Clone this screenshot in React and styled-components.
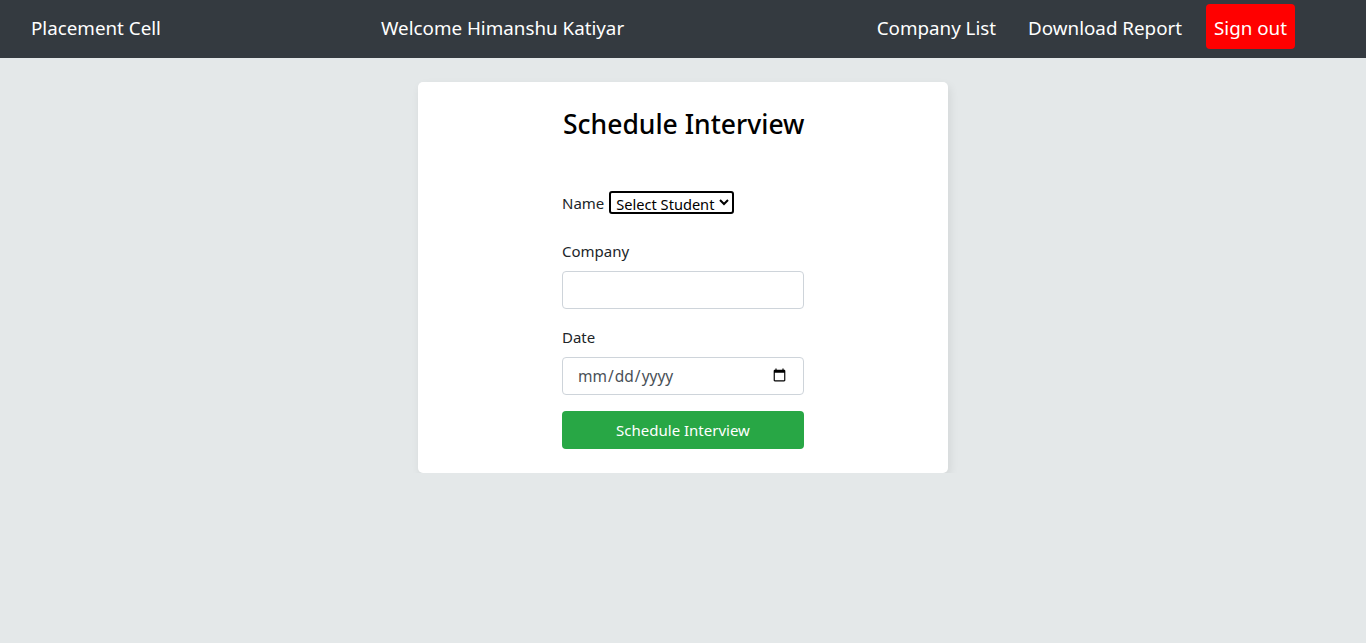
import React from "react";
import styled, { createGlobalStyle } from "styled-components";

const Global = createGlobalStyle`
  * { box-sizing: border-box; }
  body {
    margin: 0;
    background: #e4e8e9;
    font-family: "Noto Sans", "Open Sans", sans-serif;
    color: #212529;
  }
`;

const Nav = styled.nav`
  height: 58px;
  background: #343a40;
  display: flex;
  align-items: center;
  padding: 0 71px 2px 31px;
  color: #fff;
  font-size: 18.8px;
  line-height: 24px;
`;

const Brand = styled.div`
  width: 350px;
`;

const Welcome = styled.div`
  flex: 1;
`;

const NavLinks = styled.div`
  align-self: flex-start;
  margin-top: 4px;
  display: flex;
  align-items: baseline;
  gap: 32px;
`;

const NavLink = styled.a`
  color: #fff;
  text-decoration: none;
`;

const SignOut = styled.button`
  background: #ff0000;
  color: #fff;
  border: none;
  border-radius: 4px;
  font: inherit;
  height: 45px;
  padding: 12px 8px 9px;
  margin-left: -8px;
`;

const Main = styled.main`
  display: flex;
  justify-content: center;
  padding-top: 24px;
`;

const Card = styled.section`
  width: 530px;
  background: #fff;
  border-radius: 5px;
  box-shadow: 2px 4px 10px rgba(0, 0, 0, 0.08);
  padding: 25px 0 24px;
  display: flex;
  justify-content: center;
`;

const Form = styled.form`
  width: 242px;
  display: flex;
  flex-direction: column;
`;

const Title = styled.h3`
  margin: 0 0 50px;
  font-size: 26.5px;
  font-weight: 500;
  line-height: 34px;
  color: #000;
  white-space: nowrap;
  padding-left: 1px;
`;

const Row = styled.div`
  display: flex;
  align-items: center;
  gap: 4px;
  font-size: 15px;
  margin-bottom: 26px;
`;

const Select = styled.select`
  font-family: inherit;
  font-size: 14.6px;
  height: 23px;
  border: 2px solid #000;
  border-radius: 3px;
  background: #fff;
  color: #000;
  padding: 0 1px;
  margin-left: 1px;
`;

const Label = styled.label`
  font-size: 15px;
  line-height: 22px;
  margin-bottom: 9px;
`;

const Input = styled.input`
  height: 38px;
  width: 100%;
  border: 1px solid #ced4da;
  border-radius: 4px;
  padding: 6px 14px;
  font-family: inherit;
  font-size: 15.5px;
  color: #495057;
  margin-bottom: ${(p) => p.$mb || 0}px;
`;

const Submit = styled.button`
  height: 38px;
  width: 100%;
  background: #28a745;
  border: none;
  border-radius: 4px;
  color: #fff;
  font-family: inherit;
  font-size: 15px;
`;

export default function App() {
  return (
    <>
      <Global />
      <Nav>
        <Brand>Placement Cell</Brand>
        <Welcome>Welcome Himanshu Katiyar</Welcome>
        <NavLinks>
          <NavLink href="#">Company List</NavLink>
          <NavLink href="#">Download Report</NavLink>
          <SignOut>Sign out</SignOut>
        </NavLinks>
      </Nav>
      <Main>
        <Card>
          <Form onSubmit={(e) => e.preventDefault()}>
            <Title>Schedule Interview</Title>
            <Row>
              <span>Name</span>
              <Select defaultValue="">
                <option value="">Select Student</option>
              </Select>
            </Row>
            <Label>Company</Label>
            <Input type="text" $mb={17} />
            <Label>Date</Label>
            <Input type="date" $mb={16} />
            <Submit type="submit">Schedule Interview</Submit>
          </Form>
        </Card>
      </Main>
    </>
  );
}
